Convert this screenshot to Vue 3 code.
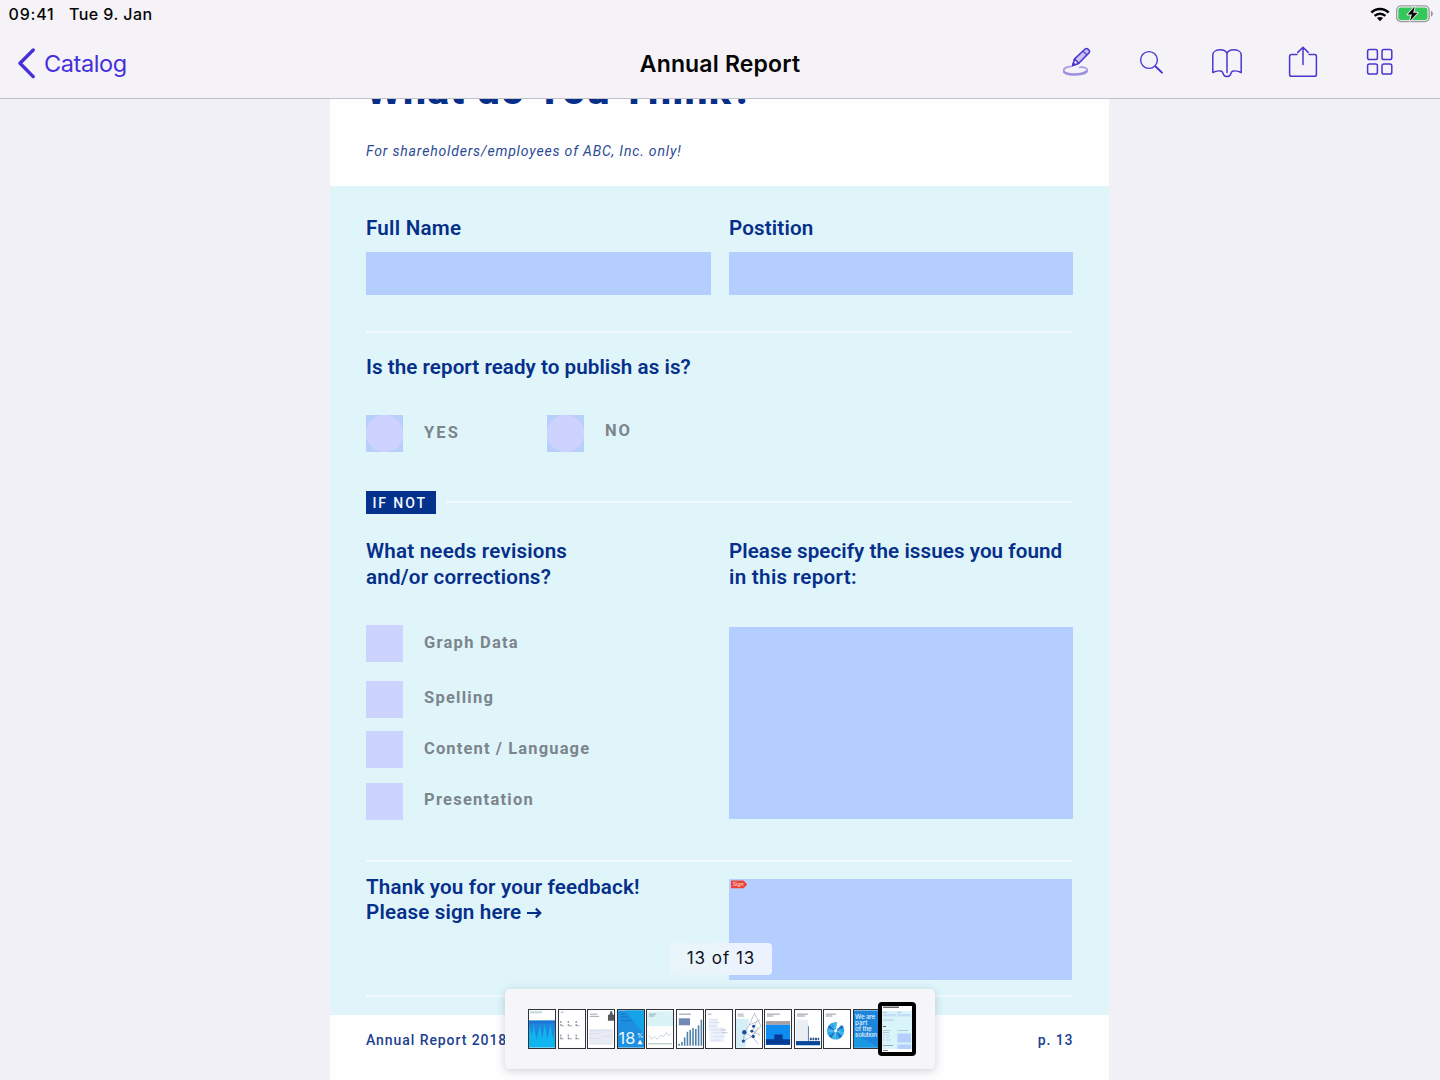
<script setup>
const revisions = ['Graph Data', 'Spelling', 'Content / Language', 'Presentation']
const bars = [2, 4, 9, 15, 17, 19, 18, 22, 28]
const petals = Array.from({ length: 12 }, (_, i) => i)
</script>

<template>
  <div class="screen">
    <header class="header">
      <div class="status">
        <div class="status-left">
          <span class="clock">09:41</span>
          <span class="date">Tue 9. Jan</span>
        </div>
        <div class="status-right">
          <svg class="wifi" width="20" height="15" viewBox="0 0 20 15" fill="none" stroke="#050505" stroke-width="2.5">
            <path d="M1.4 5.6 C6.2 .9 13.8 .9 18.6 5.6" />
            <path d="M4.6 8.9 C7.7 6 12.3 6 15.4 8.9" />
            <path d="M10 14.2 L6.9 11 C8.7 9.5 11.3 9.5 13.1 11 Z" fill="#050505" stroke="none" />
          </svg>
          <svg class="battery" width="38" height="18" viewBox="0 0 38 18">
            <rect x=".7" y=".9" width="32.4" height="15.6" rx="4.2" fill="#fafafa" stroke="#9b9a9f" stroke-width="1.4" />
            <rect x="2.3" y="2.5" width="29.2" height="12.4" rx="2.6" fill="#34c759" />
            <path d="M35 6 C37.4 6.6 37.4 10.9 35 11.5 Z" fill="#8f8e93" />
            <path d="M18.8 1.6 L11.6 9.6 H15.8 L14 16 L21.6 7.7 H17.2 Z" fill="#050505" stroke="#f4f3f7" stroke-width="1.8" paint-order="stroke" stroke-linejoin="round" />
          </svg>
        </div>
      </div>
      <div class="nav">
        <a class="back">
          <svg width="19" height="32" viewBox="0 0 19 32" fill="none" stroke="#4630da" stroke-width="3.4" stroke-linecap="round" stroke-linejoin="round">
            <path d="M16.2 3 L3 16.3 L16.2 29.6" />
          </svg>
          <span>Catalog</span>
        </a>
        <h1 class="doc-title">Annual Report</h1>
        <div class="tools">
          <svg width="32" height="36" viewBox="0 0 32 36" fill="none" stroke="#4937cf" stroke-width="1.5" stroke-linejoin="round">
            <path d="M11.5 22.4 C6 22.8 3.4 24.4 3.6 26.8 C3.9 29.6 9 30.8 15.4 30.7 C22.2 30.6 27.4 29 27.4 26.3 C27.4 24 24 22.8 19.8 23.3" stroke="#a99de4" stroke-width="1.8" stroke-linecap="round" />
            <path d="M4.4 28.2 C9 31 21 31.4 26.6 27.6" stroke="#9c8fe0" stroke-width="2.4" stroke-linecap="round" />
            <path d="M12.6 21.6 L14.6 14.9 L25.4 4.8 Q26.5 4 27.6 4.9 L29.3 6.5 Q30.1 7.5 29.2 8.6 L18.8 19.2 Z" fill="#c9c1f3" />
            <path d="M14.6 14.9 L18.8 19.2 L12.6 21.6 Z" fill="#f0eefb" />
            <path d="M12.4 22 L13.6 18.5 L15.6 20.5 Z" fill="#4937cf" stroke-width=".5" />
            <path d="M23 7.2 L27 11" stroke-width="1.1" />
          </svg>
          <svg width="32" height="36" viewBox="0 0 32 36" fill="none" stroke="#4937cf" stroke-width="1.4" stroke-linecap="round">
            <circle cx="13" cy="16" r="8.4" />
            <path d="M19.2 22.2 L20.6 23.6" />
            <path d="M20.4 23.2 L26 28.6" stroke-width="2" />
          </svg>
          <svg width="32" height="36" viewBox="0 0 32 36" fill="none" stroke="#4937cf" stroke-width="1.5" stroke-linecap="round" stroke-linejoin="round">
            <path d="M15 9.4 C14 7 11.4 5.8 8.2 5.8 C4.4 5.8 1.2 7.6 .8 10.2 V28.6 C3 27.2 7.4 26.6 9.6 27.2 C11 27.8 11 30 12 31.2 C13.2 32.8 16.8 32.8 18 31.2 C19 30 19 27.8 20.4 27.2 C22.6 26.6 27 27.2 29.2 28.6 V10.2 C28.8 7.6 25.6 5.8 21.8 5.8 C18.6 5.8 16 7 15 9.4 V28.6" />
          </svg>
          <svg width="32" height="36" viewBox="0 0 32 36" fill="none" stroke="#4937cf" stroke-width="1.5" stroke-linecap="round" stroke-linejoin="round">
            <path d="M9 10.6 H3.4 Q1.6 10.6 1.6 12.4 V30.4 Q1.6 32.2 3.4 32.2 H26.6 Q28.4 32.2 28.4 30.4 V12.4 Q28.4 10.6 26.6 10.6 H21" />
            <path d="M15 20.4 V3.4 M9.8 8.4 L15 3.2 L20.2 8.4" />
          </svg>
          <svg width="32" height="36" viewBox="0 0 32 36" fill="none" stroke="#4937cf" stroke-width="1.5">
            <rect x="3.6" y="5.6" width="9.8" height="10" rx="1.8" />
            <rect x="18" y="5.6" width="9.8" height="10" rx="1.8" />
            <rect x="3.6" y="20" width="9.8" height="10" rx="1.8" />
            <rect x="18" y="20" width="9.8" height="10" rx="1.8" />
          </svg>
        </div>
      </div>
    </header>

    <main class="viewer">
      <article class="page">
        <div class="intro">
          <h2 class="intro-title">What do You Think?</h2>
          <p class="intro-sub">For shareholders/employees of ABC, Inc. only!</p>
        </div>

        <section class="form">
          <div class="row">
            <div class="col">
              <div class="label full-name">Full Name</div>
              <div class="field input"></div>
            </div>
            <div class="col">
              <div class="label position">Postition</div>
              <div class="field input"></div>
            </div>
          </div>
          <div class="rule rule-top"></div>
          <div class="label ready">Is the report ready to publish as is?</div>
          <div class="radios">
            <div class="choice"><i class="box radio"></i><span class="yes">YES</span></div>
            <div class="choice"><i class="box radio"></i><span class="no">NO</span></div>
          </div>
          <div class="divider">
            <span class="tag">IF NOT</span>
            <div class="rule"></div>
          </div>
          <div class="row details">
            <div class="col">
              <div class="label double needs">What needs revisions<br>and/or corrections?</div>
              <div class="options">
                <div v-for="item in revisions" :key="item" class="choice option">
                  <i class="box"></i><span>{{ item }}</span>
                </div>
              </div>
            </div>
            <div class="col">
              <div class="label double specify">Please specify the issues you found<br><span class="wide">in this report:</span></div>
              <div class="field area"></div>
            </div>
          </div>
          <div class="rule rule-sign"></div>
          <div class="row sign-row">
            <div class="col">
              <div class="label double thanks">Thank you for your feedback!<br>Please sign here
                <svg class="arrow" width="17" height="14" viewBox="0 0 17 14" fill="none" stroke="#062f8a" stroke-width="2.2"><path d="M0 7 H13.5 M8.8 2.6 L13.3 7 L8.8 11.4" /></svg>
              </div>
            </div>
            <div class="col">
              <div class="field signature">
                <svg width="18" height="9" viewBox="0 0 18 9">
                  <path d="M1 .5 H13.6 L17.2 4.4 L13.6 8.3 H1 Z" fill="#ee4035" />
                  <text x="2.4" y="6.3" font-family="Inter, sans-serif" font-size="5.4" fill="#ffe3e0">Sign</text>
                </svg>
              </div>
            </div>
          </div>
          <div class="rule rule-bottom"></div>
        </section>

        <footer class="page-footer">
          <span>Annual Report 2018</span>
          <span>p. 13</span>
        </footer>
      </article>

      <div class="page-badge">13 of 13</div>

      <nav class="scrubber">
        <svg class="thumb" viewBox="0 0 28 40">
          <rect width="28" height="40" fill="#fff" />
          <path d="M1 2 H14" stroke="#c3dedd" stroke-width="2.4" />
          <rect y="11" width="28" height="29" fill="#10b5ef" />
          <path d="M0 11 H28 V17 L26 31 L23 15 L20 31 L17 15 L14 31 L12 16 L8 31 L5 15 L3 27 L0 15 Z" fill="#1e86de" />
          <path d="M0 11 H28 V14 H0 Z" fill="#1e74d6" />
        </svg>
        <svg class="thumb" viewBox="0 0 28 40">
          <rect width="28" height="40" fill="#fff" />
          <path d="M2 2 H5" stroke="#aab" />
          <g stroke="#7e8794" stroke-width="1.2">
            <path d="M2 11.5 V17 M10 11.5 V17 M18.5 11.5 V17 M2 26 V31 M10 26 V31 M18.5 26 V31" stroke-dasharray="2 1" />
            <path d="M2 16.5 H5 M10 16.5 H14 M18 16.5 H22 M2 30.5 H5 M10 30.5 H14 M18 30.5 H22" stroke-width=".8" />
          </g>
        </svg>
        <svg class="thumb" viewBox="0 0 28 40">
          <rect width="28" height="40" fill="#fff" />
          <path d="M2 4 H10 M2 6.4 H12" stroke="#9b9fa8" stroke-width="1" />
          <path d="M21.5 5 L23.5 4 L24 1 H26 L26.5 4 L28 5 V11 H21.5 Z" fill="#565b60" />
          <rect x="1" y="20" width="26" height="17" fill="#e8eaf4" />
          <path d="M2 22 H13 M2 25 H12 M15 22 H26 M15 28 H25 M2 30 H13" stroke="#dadeed" />
        </svg>
        <svg class="thumb" viewBox="0 0 28 40">
          <rect width="28" height="40" fill="#1d8fe0" />
          <path d="M8 0 H28 V26 Z" fill="#14a4e6" />
          <path d="M3 4 H8 M3 7 H11 M3 11 H15" stroke="#1573bd" />
          <text x=".6" y="36" font-family="Inter, sans-serif" font-size="17.5" fill="#e9f6fe">18</text>
          <text x="20.4" y="29.4" font-family="Inter, sans-serif" font-size="7" fill="#e9f6fe">%</text>
          <path d="M23.8 31.5 L26.6 36.4 H21 Z" fill="#fff" />
        </svg>
        <svg class="thumb" viewBox="0 0 28 40">
          <rect width="28" height="40" fill="#fff" />
          <rect y="1" width="28" height="16" fill="#daf3f7" />
          <path d="M2 4 H10 M2 6 H8" stroke="#8fa9b4" stroke-width="1" />
          <path d="M2 27 L5 31 L8 28 L11 31 L14 27 L18 28 L21 24 L23 27 L26 25" fill="none" stroke="#b9cfd6" stroke-width=".9" />
          <path d="M1 36 H27" stroke="#9aa" stroke-width=".9" />
        </svg>
        <svg class="thumb" viewBox="0 0 28 40">
          <rect width="28" height="40" fill="#fff" />
          <path d="M2 4 H15" stroke="#85888f" />
          <rect x="2" y="8.5" width="12" height="7.5" fill="#7288b5" />
          <rect v-for="(h, i) in bars" :key="i" :x="1.4 + i * 3" :y="38 - h" width="1.7" :height="h" fill="#4f83ab" />
        </svg>
        <svg class="thumb" viewBox="0 0 28 40">
          <rect width="28" height="40" fill="#fff" />
          <path d="M2 4 H6" stroke="#9aa0b0" />
          <path d="M3 9 H13 V18 H20 V34 H4 V22 H2 Z" fill="#edf1fa" />
          <path d="M3 10 H12 M3 13 H15 M3 17 H12 M5 21 H20 M7 24 H24 M8 28 H20 M5 32 H16" stroke="#d3dcf0" stroke-width=".9" />
          <path d="M16 21 H22 M17 24 H22" stroke="#b9c1d4" stroke-width=".9" />
        </svg>
        <svg class="thumb" viewBox="0 0 28 40">
          <rect width="28" height="40" fill="#fff" />
          <path d="M0 9 H14 L10 40 H0 Z" fill="#d5eef7" />
          <path d="M2 4 H8 M2 6 H9" stroke="#8d97a8" stroke-width=".9" />
          <path d="M20 3 L14 16 L26 10 M14 16 L9 24 L17 28 L24 18 M17 28 L24 36 M20 3 L27 17 L17 28 M9 24 L8 33 L17 28 M22 12 L18 22 L26 27" fill="none" stroke="#a5b0ba" stroke-width=".8" />
          <g fill="#1a4d9d"><circle cx="9" cy="23.5" r="2.4" /><circle cx="19" cy="17" r="1.7" /><circle cx="17" cy="22.5" r="1.6" /><circle cx="18.5" cy="28" r="1.8" /><circle cx="8" cy="33" r="1.7" /></g>
        </svg>
        <svg class="thumb" viewBox="0 0 28 40">
          <rect width="28" height="40" fill="#fff" />
          <path d="M2 4 H16 M2 6 H9" stroke="#7f838c" stroke-width=".9" />
          <rect x="1" y="11.5" width="26" height="4" fill="#a99ea2" />
          <rect x="1" y="15.5" width="26" height="21.5" fill="#0e8cf0" />
          <path d="M1 31 H10 V26 H19 V31 H27 V37 H1 Z" fill="#053a94" />
        </svg>
        <svg class="thumb" viewBox="0 0 28 40">
          <rect width="28" height="40" fill="#fff" />
          <path d="M2 4 H14 M2 6 H11" stroke="#7f838c" stroke-width=".9" />
          <rect x="1" y="10" width="13" height="23" fill="#e9eff4" />
          <path d="M14.5 17 V33" stroke="#52719a" />
          <path d="M16 30.8 H26" stroke="#2d4f8a" stroke-width="2.6" stroke-dasharray="2 .8" />
          <rect x="1" y="33" width="26" height="4.5" fill="#08469a" />
        </svg>
        <svg class="thumb" viewBox="0 0 28 40">
          <rect width="28" height="40" fill="#fff" />
          <path d="M2 4 H13 M2 6 H9" stroke="#7f838c" stroke-width=".9" />
          <g transform="translate(12.5 22)">
            <path v-for="i in petals" :key="i" d="M0 0 L-2.3 -8.8 Q0 -10.2 2.2 -8.8 Z" :fill="i % 3 === 0 ? '#1673cb' : i % 3 === 1 ? '#22a6e6' : '#3bb8ea'" :transform="`rotate(${i * 27 + 60})`" />
            <circle r="1.5" fill="#fff" />
          </g>
        </svg>
        <svg class="thumb" viewBox="0 0 28 40">
          <rect width="28" height="40" fill="#1c84da" />
          <path d="M0 26 L28 40 H0 Z" fill="#1a98e2" />
          <g font-family="Inter, sans-serif" font-size="6.8" font-weight="500" fill="#e4f3fd">
            <text x="1.2" y="9.2" letter-spacing="-.2">We are</text>
            <text x="1.2" y="15.8">part</text>
            <text x="1.2" y="22.4" letter-spacing="-.2">of the</text>
            <text x="1.2" y="29" letter-spacing="-.3">solution</text>
          </g>
        </svg>
        <div class="current">
          <svg viewBox="0 0 30 46">
            <rect width="30" height="46" fill="#fff" />
            <path d="M1 1.2 H17" stroke="#222" stroke-width="1" />
            <rect y="5" width="30" height="38" fill="#d9f4f9" />
            <rect x="1" y="8" width="13" height="2.4" fill="#c3dcf8" /><rect x="15.5" y="8" width="13" height="2.4" fill="#c3dcf8" />
            <path d="M1 6.5 H5 M15.5 6.5 H19 M1 14 H12 M1 24.5 H8 M15.5 24.5 H26 M1 26.5 H7" stroke="#a3c2d8" stroke-width=".8" />
            <path d="M1 20.5 H4" stroke="#456" stroke-width=".9" />
            <rect x="15.5" y="27.5" width="13.5" height="9" fill="#b4cffc" />
            <path d="M1 29 H2.5 M1 31.5 H2.5 M1 34 H2.5" stroke="#c9cdfa" stroke-width="1.6" />
            <path d="M4 29 H8 M4 31.5 H7 M4 34 H9" stroke="#b4c8d2" stroke-width=".7" />
            <rect x="15.5" y="38.5" width="13.5" height="4.5" fill="#b4cffc" />
            <path d="M1 39.5 H11" stroke="#7f9dc0" stroke-width=".9" />
            <path d="M1 44.5 H6" stroke="#6b7787" stroke-width=".8" />
          </svg>
        </div>
      </nav>
    </main>
  </div>
</template>

<style>
body {
  margin: 0;
  overflow: hidden;
}
</style>

<style scoped>
.screen {
  width: 1440px;
  height: 1080px;
  display: flex;
  flex-direction: column;
  overflow: hidden;
  background: #f2f0f7;
  font-family: Inter, "Liberation Sans", sans-serif;
}
.header {
  height: 98px;
  flex: none;
  background: #f5f3f7;
  border-bottom: 1px solid #c3c1c7;
}
.status {
  height: 28px;
  display: flex;
  justify-content: space-between;
  font-size: 16px;
  font-weight: 450;
  line-height: 28px;
  color: #050505;
}
.status-left {
  display: flex;
  padding-left: 8.5px;
}
.clock {
  width: 60.5px;
  letter-spacing: .8px;
}
.date {
  letter-spacing: .45px;
}
.status-right {
  display: flex;
  align-items: flex-start;
  padding-right: 6px;
}
.wifi {
  margin: 7px 6px 0 0;
}
.battery {
  margin-top: 5px;
}
.nav {
  height: 70px;
  display: grid;
  grid-template-columns: 1fr auto 1fr;
  align-items: center;
}
.back {
  display: flex;
  align-items: center;
  gap: 8px;
  padding-left: 17px;
  color: #4630da;
  font-size: 23.5px;
  letter-spacing: -.4px;
}
.doc-title {
  margin: 0;
  padding-top: 1px;
  font-size: 23px;
  font-weight: 575;
  letter-spacing: .17px;
  color: #050505;
}
.tools {
  display: flex;
  justify-content: flex-end;
  gap: 44px;
  padding: 0 44px 2px 0;
}
.tools svg {
  display: block;
}

.viewer {
  position: relative;
  height: 981px;
  overflow: hidden;
}
.page {
  width: 779px;
  height: 981px;
  margin-left: 330px;
  display: flex;
  flex-direction: column;
  overflow: hidden;
  background: #fffeff;
  font-family: Roboto, "Noto Sans", sans-serif;
  color: #062f8a;
}
.intro {
  height: 87px;
  flex: none;
  padding-left: 36px;
}
.intro-title {
  margin: -33px 0 27px;
  font-size: 41px;
  line-height: 48px;
  font-weight: 800;
  letter-spacing: 1.2px;
}
.intro-sub {
  margin: 0;
  font-size: 14px;
  line-height: 20px;
  font-style: italic;
  letter-spacing: .83px;
  color: #2a4b94;
}
.form {
  height: 799px;
  flex: none;
  padding: 30px 36px 0;
  background: #dff5fa;
}
.row {
  display: grid;
  grid-template-columns: 344.5px 344px;
  column-gap: 18.5px;
}
.label {
  font-size: 20.6px;
  line-height: 25px;
  font-weight: 560;
  white-space: nowrap;
  letter-spacing: .07px;
}
.double {
  padding-top: .7px;
  margin-bottom: -.7px;
  line-height: 25.5px;
}
.full-name { letter-spacing: .25px; }
.position { letter-spacing: .15px; }
.needs { letter-spacing: .2px; }
.thanks { letter-spacing: .17px; }
.wide { letter-spacing: .3px; }
.field {
  background: #b4cfff;
}
.input {
  height: 43px;
  margin-top: 11px;
}
.rule {
  height: 2px;
  background: #f1fbfe;
}
.rule-top { margin-top: 36px; }
.ready {
  padding-top: 1px;
  margin: 21px 0 -1px;
  letter-spacing: .05px;
}
.radios {
  display: flex;
  margin-top: 36px;
}
.radios .choice {
  width: 181px;
}
.choice {
  display: flex;
  height: 36.5px;
  gap: 21.5px;
  font-size: 16.5px;
  line-height: 36.5px;
  font-weight: 700;
  letter-spacing: 1.25px;
  color: #7c848c;
}
.box {
  width: 36.5px;
  height: 36.5px;
  background: #ccd3fe;
}
.radio {
  background: radial-gradient(circle, #ced2fe 18.2px, #b8cffc 18.8px);
}
.yes {
  font-size: 16.5px;
  letter-spacing: 2.1px;
}
.no {
  font-size: 16.5px;
  line-height: 31px;
  letter-spacing: 1.8px;
}
.divider {
  display: flex;
  align-items: center;
  gap: 10px;
  margin-top: 39px;
}
.divider .rule {
  flex: 1;
}
.tag {
  width: 63px;
  height: 22px;
  padding: 1px 0 0 6.5px;
  background: #03318c;
  color: #f3f8ff;
  font-size: 14px;
  font-weight: 500;
  line-height: 23px;
  letter-spacing: 1.9px;
}
.details { margin-top: 25px; }
.options { padding-top: 35.5px; }
.option { margin-bottom: 19.5px; line-height: 36px; }
.option:nth-child(2) { margin-bottom: 13.5px; line-height: 34px; }
.option:nth-child(3) { margin-bottom: 15.5px; line-height: 36px; letter-spacing: 1.13px; }
.option:nth-child(4) { margin-bottom: 0; line-height: 34px; }
.area {
  height: 192.5px;
  margin-top: 37px;
}
.rule-sign { margin-top: 40px; }
.sign-row { margin-top: 12.5px; }
.arrow {
  margin-left: 0;
  vertical-align: -1px;
}
.signature {
  width: 343px;
  height: 101.5px;
  margin-top: 4.5px;
}
.signature svg {
  display: block;
  padding: 1px 0 0 1px;
}
.rule-bottom { margin-top: 15px; }
.page-footer {
  display: flex;
  justify-content: space-between;
  padding: 15px 35.5px 0 36px;
  font-size: 14px;
  font-weight: 500;
  line-height: 20px;
  letter-spacing: .93px;
  color: #1c3f8f;
}

.page-badge {
  position: absolute;
  left: 669px;
  top: 844px;
  width: 102px;
  height: 32px;
  padding-left: 1px;
  border-radius: 4px;
  background: linear-gradient(90deg, #e8f5fa 0, #eaf4fb 58px, #edf3fe 62px);
  text-align: center;
  font-size: 17px;
  line-height: 31px;
  letter-spacing: .95px;
  color: #10131a;
}
.scrubber {
  position: absolute;
  left: 505px;
  top: 890px;
  width: 407px;
  height: 80px;
  display: flex;
  align-items: center;
  gap: 1.5px;
  padding-left: 23px;
  border-radius: 5px;
  background: #f6f5f8;
  box-shadow: 0 2px 10px rgba(30, 50, 80, .22);
}
.thumb {
  width: 26px;
  height: 38px;
  flex: none;
  border: 1px solid #30343a;
}
.current {
  width: 30px;
  height: 46px;
  flex: none;
  margin-left: -4.5px;
  border: 4px solid #000;
  border-radius: 4px;
  background: #000;
  z-index: 1;
}
.current svg {
  display: block;
  width: 30px;
  height: 46px;
}
</style>
